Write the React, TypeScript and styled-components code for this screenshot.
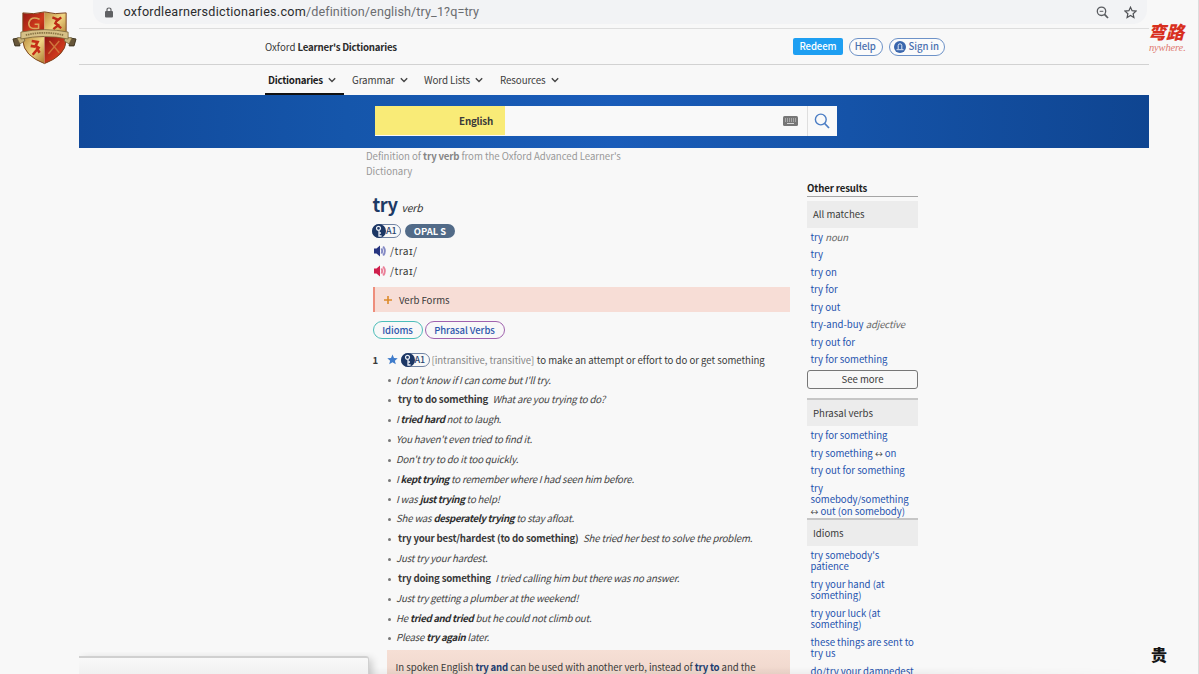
import React from "react";
import styled, { createGlobalStyle } from "styled-components";

const Global = createGlobalStyle`
  * { box-sizing: border-box; }
  html, body { margin: 0; padding: 0; background: #f8f8f8; overflow: hidden; }
  body { font-family: "Noto Sans CJK SC", "Open Sans", sans-serif; color: #3a3a3a; font-size: 10.3px; }
  b { font-weight: 700; }
`;

const Frame = styled.div`
  position: relative;
  width: 1199px;
  height: 674px;
  overflow: hidden;
  display: grid;
  grid-template-columns: 78.5px 1070.5px 1fr;
  background: #f8f8f8;
`;
const LeftRail = styled.aside`
  padding: 10px 0 0 12px;
  svg { display: block; }
`;
const RightRail = styled.aside`
  height: 674px;
  border-right: 1px solid #dcdcdc;
  display: flex;
  flex-direction: column;
  align-items: flex-start;
`;
const Slogan = styled.div`
  margin: 20px 0 0 -1px;
  color: #d8301f;
  font-size: 18px;
  line-height: 22px;
  font-weight: 900;
  font-style: italic;
  white-space: nowrap;
`;
const SloganScript = styled.div`
  color: #e07a70;
  font: italic 10.5px/12px "Liberation Serif", serif;
  letter-spacing: -0.15px;
  white-space: nowrap;
`;
const Caption = styled.div`
  margin: auto 0 8px 2px;
  color: #161616;
  font-size: 16px;
  line-height: 24px;
  font-weight: 900;
`;

const Page = styled.main`
  height: 674px;
  overflow: hidden;
  display: flex;
  flex-direction: column;
`;
const AddressBar = styled.div`
  flex: none;
  height: 29px;
  border-bottom: 1px solid #dddddd;
`;
const AddressPill = styled.div`
  height: 24px;
  margin: 0 2px 0 14.5px;
  padding: 0 10px 0 12px;
  border-radius: 0 0 14px 14px;
  background: #f2f3f5;
  display: flex;
  align-items: center;
`;
const Url = styled.div`
  flex: 1;
  margin-left: 10.5px;
  font: 12.6px/24px Roboto, sans-serif;
  letter-spacing: 0.1px;
  color: #6b6d70;
  white-space: nowrap;
  span { color: #2b2c2e; letter-spacing: 0.25px; }
`;
const BarIcons = styled.div`
  display: flex;
  gap: 15px;
  align-items: center;
`;
const Header = styled.header`
  flex: none;
  height: 36px;
  border-bottom: 1px solid #d2d2d2;
  padding: 0 204px 0 186.5px;
  display: flex;
  align-items: center;
`;
const Brand = styled.div`
  flex: 1;
  font-size: 9.7px;
  white-space: nowrap;
  b { color: #2c2c2c; letter-spacing: -0.23px; }
`;
const Redeem = styled.button`
  width: 50px;
  height: 17px;
  border: 0;
  padding: 0;
  border-radius: 2px;
  background: #1e9ff2;
  color: #fff;
  font: 500 9.6px/17px "Noto Sans CJK SC", sans-serif;
  letter-spacing: -0.1px;
`;
const PillButton = styled.button<{ $w: number }>`
  width: ${(p) => p.$w}px;
  height: 18px;
  margin-left: 6px;
  padding: 0 1.5px 0 0;
  border: 1px solid #6d92c8;
  border-radius: 9px;
  background: #fbfbfb;
  color: #4a70b0;
  font: 500 9.6px/15px "Noto Sans CJK SC", sans-serif;
  letter-spacing: -0.1px;
  display: flex;
  align-items: center;
  justify-content: center;
  gap: 3px;
`;
const Nav = styled.nav`
  flex: none;
  height: 30px;
  padding-left: 186.5px;
  display: flex;
  gap: 5px;
`;
const NavItem = styled.div<{ $w: number; $active?: boolean }>`
  width: ${(p) => p.$w}px;
  padding: 2px 0 0 3px;
  display: flex;
  align-items: center;
  gap: 5px;
  font-size: 9.8px;
  letter-spacing: ${(p) => (p.$active ? -0.27 : -0.1)}px;
  white-space: nowrap;
  border-bottom: 2px solid ${(p) => (p.$active ? "#111" : "transparent")};
  font-weight: ${(p) => (p.$active ? 700 : 400)};
  color: ${(p) => (p.$active ? "#1c1c1c" : "#3c3c3c")};
`;
const Banner = styled.div`
  flex: none;
  height: 53px;
  padding: 11px 0 0 296.5px;
  background: linear-gradient(90deg, #11499a 0%, #1556ab 25%, #1a5cb9 50%, #1553a8 72%, #0f4591 100%);
`;
const SearchBox = styled.div`
  width: 462px;
  height: 30px;
  background: #f9f9f9;
  display: flex;
  align-items: flex-start;
`;
const Language = styled.div`
  width: 130px;
  height: 29px;
  padding-right: 12px;
  background: #f9eb77;
  text-align: right;
  font-weight: 700;
  font-size: 9.8px;
  letter-spacing: -0.2px;
  line-height: 30px;
`;
const SearchField = styled.div`
  flex: 1;
  height: 30px;
  display: flex;
  align-items: center;
  justify-content: flex-end;
  padding-right: 9px;
`;
const SearchButton = styled.div`
  width: 30px;
  height: 30px;
  border-left: 1px solid #dedede;
  padding-right: 1px;
  display: flex;
  align-items: center;
  justify-content: center;
`;

const Content = styled.div`
  display: flex;
  align-items: flex-start;
  padding-left: 287.5px;
`;
const Entry = styled.article`
  width: 424px;
  flex: none;
`;
const Definition = styled.p`
  width: 280px;
  margin: 1px 0 0;
  font-size: 9.65px;
  letter-spacing: -0.03px;
  line-height: 15px;
  color: #999;
  b { color: #858585; letter-spacing: -0.17px; }
`;
const Body = styled.div`
  padding-left: 6.5px;
`;
const Headword = styled.h1`
  margin: 12px 0 0;
  height: 26px;
  display: flex;
  align-items: baseline;
  gap: 4px;
  font-size: 18.3px;
  letter-spacing: -0.5px;
  line-height: 26px;
  color: #1d3a66;
  i { font-size: 10.4px; font-weight: 400; color: #333; letter-spacing: -0.1px; }
`;
const Badges = styled.div`
  height: 16px;
  margin: 5.5px 0 2.5px -0.5px;
  display: flex;
  align-items: center;
  gap: 4px;
`;
const LevelBadge = styled.span`
  flex: none;
  width: 29px;
  height: 14px;
  border: 1px solid #7083a3;
  border-radius: 7px;
  display: inline-flex;
  align-items: center;
  font-size: 9px;
  font-weight: 500;
  line-height: 12px;
  color: #29456f;
  svg { margin-left: -1px; flex: none; }
`;
const Opal = styled.span`
  width: 50px;
  height: 14px;
  border-radius: 7px;
  background: #526b88;
  color: #fff;
  font-size: 9.4px;
  font-weight: 700;
  line-height: 14px;
  text-align: center;
`;
const Pron = styled.div`
  height: 20px;
  padding-left: 1.5px;
  display: flex;
  align-items: center;
  gap: 4px;
  font-size: 10.2px;
  letter-spacing: 0.4px;
  line-height: 20px;
`;
const VerbForms = styled.div`
  width: 417px;
  height: 25px;
  margin-top: 6px;
  border-left: 2px solid #ee8e7c;
  background: #f7ddd6;
  display: flex;
  align-items: center;
  padding-left: 9.5px;
  gap: 7px;
  font-size: 9.6px;
`;
const Jumps = styled.div`
  margin-top: 8.5px;
  display: flex;
  gap: 2px;
`;
const Jump = styled.a<{ $w: number; $c: string }>`
  width: ${(p) => p.$w}px;
  height: 18px;
  border: 1px solid ${(p) => p.$c};
  border-radius: 9px;
  color: #2d57ad;
  font-size: 9.5px;
  font-weight: 500;
  letter-spacing: -0.05px;
  line-height: 16px;
  text-align: center;
`;
const Sense = styled.div`
  height: 20px;
  margin-top: 11px;
  display: flex;
  align-items: center;
  white-space: nowrap;
  line-height: 20px;
  font-size: 9.6px;
  letter-spacing: -0.02px;
`;
const SenseNumber = styled.b`
  width: 14px;
`;
const StarSlot = styled.span`
  width: 14px;
  flex: none;
  display: flex;
`;
const Grammar = styled.span`
  margin: 0 2.5px 0 2px;
  color: #858585;
  letter-spacing: -0.04px;
`;
const Examples = styled.ul`
  list-style: none;
  margin: 1px 0 0;
  padding: 0 0 0 15.5px;
`;
const Example = styled.li`
  height: 19.85px;
  display: flex;
  align-items: center;
  white-space: pre;
  font-size: 9.7px;
  line-height: 19.85px;
  &::before {
    content: "";
    width: 3px;
    height: 3px;
    margin: 1px 5px 0 0;
    border-radius: 50%;
    background: #777;
  }
  i { letter-spacing: -0.2px; color: #444; }
  i b { color: #2e2e2e; letter-spacing: -0.36px; }
`;
const Pattern = styled.b`
  margin: 0 4.5px 0 2px;
  letter-spacing: -0.2px;
`;
const Note = styled.div`
  width: 403px;
  height: 40px;
  margin: 2px 0 0 14px;
  padding: 6.5px 0 0 9px;
  background: linear-gradient(#f6dfd5, #ecd3c8);
  font-size: 9.6px;
  letter-spacing: -0.02px;
  line-height: 20px;
  white-space: nowrap;
  b { color: #203c70; letter-spacing: -0.2px; }
`;

const Sidebar = styled.aside`
  width: 111px;
  margin: 34px 0 0 17px;
`;
const SideTitle = styled.div`
  height: 15px;
  border-bottom: 1px solid #a5a5a5;
  font-size: 9.6px;
  letter-spacing: -0.12px;
  line-height: 12px;
  font-weight: 700;
  color: #222;
  margin-bottom: 4px;
`;
const SideHeading = styled.div<{ $rule?: boolean }>`
  height: ${(p) => (p.$rule ? 28 : 27)}px;
  border-top: ${(p) => (p.$rule ? "2px solid #c6c6c6" : "0")};
  background: #ececec;
  padding-left: 6px;
  font-size: 9.6px;
  line-height: 27px;
`;
const Links = styled.div`
  padding: 4px 0 0 3.5px;
`;
const SideLink = styled.div`
  padding-bottom: 5.9px;
  font-size: 9.6px;
  letter-spacing: -0.02px;
  line-height: 11.6px;
  color: #1f53ae;
  white-space: pre;
  i { color: #666; letter-spacing: -0.15px; }
  &:last-child { padding-bottom: 0.3px; }
`;
const Arrow = styled.span`
  font-size: 7.8px;
  line-height: 8px;
  color: #444;
`;
const SeeMore = styled.div`
  width: 111px;
  height: 19px;
  margin: 4px 0 8.8px;
  border: 1px solid #777;
  border-radius: 3px;
  font-size: 9.6px;
  line-height: 17px;
  text-align: center;
`;

const StatusPopup = styled.div`
  position: absolute;
  left: 79px;
  top: 656px;
  width: 290px;
  height: 30px;
  border: solid #d0d0d0;
  border-width: 2px 1px 0 0;
  border-radius: 0 3px 0 0;
  background: linear-gradient(#f9f9f9, #f0f0f0 18px);
  box-shadow: 3px 3px 8px rgba(0, 0, 0, 0.2);
  clip-path: inset(-4px -14px 0 0);
`;
const BottomShade = styled.div`
  position: absolute;
  left: 369px;
  top: 667px;
  width: 780px;
  height: 7px;
  background: linear-gradient(rgba(0, 0, 0, 0), rgba(0, 0, 0, 0.04));
  mask-image: linear-gradient(90deg, #000 70%, transparent);
`;

const Crest = () => (
  <svg width="65" height="56" viewBox="0 0 66 56">
    <defs>
      <linearGradient id="red" x1="0" y1="0" x2="1" y2="1">
        <stop offset="0" stopColor="#8e1512" />
        <stop offset="0.6" stopColor="#cf3a1c" />
        <stop offset="1" stopColor="#981a12" />
      </linearGradient>
      <linearGradient id="gold" x1="0" y1="0" x2="1" y2="1">
        <stop offset="0" stopColor="#b98a3c" />
        <stop offset="0.5" stopColor="#f0d583" />
        <stop offset="1" stopColor="#a8762b" />
      </linearGradient>
      <clipPath id="shield">
        <path d="M11 2.5 Q22 4.500 33 1.500 Q44 4.500 55 2.500 V31 Q54 46 33 54 Q12 46 11 31Z" />
      </clipPath>
    </defs>
    <g clipPath="url(#shield)">
      <rect x="10" y="0" width="23" height="27" fill="url(#red)" />
      <rect x="33" y="0" width="23" height="27" fill="url(#gold)" />
      <rect x="10" y="27" width="23" height="28" fill="url(#gold)" />
      <rect x="33" y="27" width="23" height="28" fill="url(#red)" />
      <path d="M28 9 Q19 5 17 13 Q17 20 27 18 V14 H23" fill="none" stroke="#d9a75b" strokeWidth="1.600" />
      <path d="M41 7 L46 9 L44 13 L47 15 L42 19 M45 11 L50 7 M46 15 L50 18" fill="none" stroke="#bd2a16" strokeWidth="2.400" />
      <path d="M20 31 L26 32 L24 36 L27 38 L21 45 M24 37 L19 36 M25 38 L28 43" fill="none" stroke="#c52d17" strokeWidth="2.600" />
      <path d="M38 31 L48 43 M48 31 L37 44" stroke="#d0763c" strokeWidth="1.400" />
    </g>
    <path d="M11 2.500 Q22 4.500 33 1.500 Q44 4.500 55 2.500 V31 Q54 46 33 54 Q12 46 11 31Z" fill="none" stroke="#7d451c" />
    <path d="M1 29 L7 28 L8 36 L3 36Z M65 29 L59 28 L58 36 L63 36Z" fill="#67563a" stroke="#3f3521" />
    <path d="M5 28 L12 27 L13 31 L8 34Z M61 28 L54 27 L53 31 L58 34Z" fill="#c7b27a" stroke="#6b5a35" strokeWidth="0.700" />
    <path d="M9 22 Q33 17 57 22 L57 29 Q33 24 9 29Z" fill="#d6c087" stroke="#78643a" strokeWidth="0.800" />
    <path d="M14 25 Q33 20.500 52 25" fill="none" stroke="#8a7546" strokeWidth="1.800" strokeDasharray="1.500 0.800" />
  </svg>
);
const Chevron = () => (
  <svg width="8" height="6" viewBox="0 0 8 6">
    <path d="M0.800 1.200 L4 4.400 L7.200 1.200" fill="none" stroke="#444" strokeWidth="1.400" />
  </svg>
);
const KeyIcon = () => (
  <svg width="14" height="14" viewBox="0 0 14 14">
    <circle cx="7" cy="7" r="7" fill="#1c3765" />
    <circle cx="6.500" cy="4.300" r="2" fill="none" stroke="#e9edf4" strokeWidth="1.200" />
    <path d="M7 6.300 V12 H9.600 M7 9 H9" fill="none" stroke="#e9edf4" strokeWidth="1.300" />
  </svg>
);
const Level = () => (
  <LevelBadge>
    <KeyIcon />
    <span>A1</span>
  </LevelBadge>
);
const Speaker = ({ dark, light }: { dark: string; light: string }) => (
  <svg width="12" height="12" viewBox="0 0 12 12">
    <path d="M0 3.500 H2.500 L6 0.500 V11.500 L2.500 8.500 H0Z" fill={dark} />
    <path d="M7.500 3.300 Q8.800 6 7.500 8.700 M9.200 1.500 Q12.500 6 9.200 10.500" fill="none" stroke={light} strokeWidth="1.900" />
  </svg>
);

export default function App() {
  return (
    <>
      <Global />
      <Frame>
        <LeftRail>
          <Crest />
        </LeftRail>
        <Page>
          <AddressBar>
            <AddressPill>
              <svg width="8" height="11" viewBox="0 0 8 11">
                <rect y="4" width="8" height="6.500" rx="1" fill="#606164" />
                <path d="M2 4.500 V2.700 Q2 1 4 1 Q6 1 6 2.700 V4.500" fill="none" stroke="#606164" strokeWidth="1.200" />
              </svg>
              <Url>
                <span>oxfordlearnersdictionaries.com</span>/definition/english/try_1?q=try
              </Url>
              <BarIcons>
                <svg width="13" height="13" viewBox="0 0 13 13" fill="none" stroke="#5a5c60">
                  <circle cx="5.500" cy="5.300" r="4.200" strokeWidth="1.300" />
                  <path d="M3.700 5.300 H7.300" />
                  <path d="M8.500 8.300 L12 12" strokeWidth="1.700" />
                </svg>
                <svg width="13" height="13" viewBox="0 0 13 13">
                  <path d="M6.500 1.200 L8.100 4.700 L12 5.100 L9.100 7.700 L9.900 11.500 L6.500 9.500 L3.100 11.500 L3.900 7.700 L1 5.100 L4.900 4.700Z" fill="none" stroke="#505256" strokeWidth="1.200" />
                </svg>
              </BarIcons>
            </AddressPill>
          </AddressBar>
          <Header>
            <Brand>
              Oxford <b>Learner's Dictionaries</b>
            </Brand>
            <Redeem>Redeem</Redeem>
            <PillButton $w={34}>Help</PillButton>
            <PillButton $w={56}>
              <svg width="12" height="12" viewBox="0 0 12 12">
                <circle cx="6" cy="6" r="6" fill="#3a66ad" />
                <path d="M4.200 8 V4.500 Q4.200 2.800 6 2.800 Q7.800 2.800 7.800 4.500 V8 M2.500 8.700 H9.500" fill="none" stroke="#dfe8f5" />
              </svg>
              Sign in
            </PillButton>
          </Header>
          <Nav>
            <NavItem $w={79} $active>Dictionaries <Chevron /></NavItem>
            <NavItem $w={67}>Grammar <Chevron /></NavItem>
            <NavItem $w={71}>Word Lists <Chevron /></NavItem>
            <NavItem $w={70}>Resources <Chevron /></NavItem>
          </Nav>
          <Banner>
            <SearchBox>
              <Language>English</Language>
              <SearchField>
                <svg width="15" height="10" viewBox="0 0 15 10">
                  <rect width="15" height="10" rx="1.500" fill="#777" />
                  <path d="M2 3 H13 M2 5 H13" stroke="#d8d8d8" strokeDasharray="1 1" />
                  <path d="M4 7.500 H11" stroke="#d8d8d8" />
                </svg>
              </SearchField>
              <SearchButton>
                <svg width="16" height="16" viewBox="0 0 16 16" fill="none" stroke="#4b7dc4">
                  <circle cx="6.800" cy="6.500" r="5.400" strokeWidth="1.400" />
                  <path d="M10.700 10.500 L15 15" strokeWidth="1.800" />
                </svg>
              </SearchButton>
            </SearchBox>
          </Banner>
          <Content>
            <Entry>
              <Definition>
                Definition of <b>try verb</b> from the Oxford Advanced Learner's
                <br />
                Dictionary
              </Definition>
              <Body>
                <Headword>
                  try <i>verb</i>
                </Headword>
                <Badges>
                  <Level />
                  <Opal>OPAL S</Opal>
                </Badges>
                <Pron><Speaker dark="#26347f" light="#8389c4" />/traɪ/</Pron>
                <Pron><Speaker dark="#cf1f4c" light="#ea7f98" />/traɪ/</Pron>
                <VerbForms>
                  <svg width="8" height="8" viewBox="0 0 8 8">
                    <path d="M4 0 V8 M0 4 H8" stroke="#dd8a2b" strokeWidth="1.600" />
                  </svg>
                  Verb Forms
                </VerbForms>
                <Jumps>
                  <Jump $w={50} $c="#4dbdb9">Idioms</Jump>
                  <Jump $w={80} $c="#a063ae">Phrasal Verbs</Jump>
                </Jumps>
                <Sense>
                  <SenseNumber>1</SenseNumber>
                  <StarSlot>
                    <svg width="11" height="11" viewBox="0 0 11 11">
                      <path d="M5.500 0.500 L7 4 L10.700 4.200 L7.900 6.700 L8.800 10.300 L5.500 8.300 L2.200 10.300 L3.100 6.700 L0.300 4.200 L4 4Z" fill="#3f7ccb" />
                    </svg>
                  </StarSlot>
                  <Level />
                  <Grammar>[intransitive, transitive]</Grammar>
                  to make an attempt or effort to do or get something
                </Sense>
                <Examples>
                  <Example><i>I don't know if I can come but I'll try.</i></Example>
                  <Example><Pattern>try to do something</Pattern><i>What are you trying to do?</i></Example>
                  <Example><i>I <b>tried hard</b> not to laugh.</i></Example>
                  <Example><i>You haven't even tried to find it.</i></Example>
                  <Example><i>Don't try to do it too quickly.</i></Example>
                  <Example><i>I <b>kept trying</b> to remember where I had seen him before.</i></Example>
                  <Example><i>I was <b>just trying</b> to help!</i></Example>
                  <Example><i>She was <b>desperately trying</b> to stay afloat.</i></Example>
                  <Example><Pattern>try your best/hardest (to do something)</Pattern><i>She tried her best to solve the problem.</i></Example>
                  <Example><i>Just try your hardest.</i></Example>
                  <Example><Pattern>try doing something</Pattern><i>I tried calling him but there was no answer.</i></Example>
                  <Example><i>Just try getting a plumber at the weekend!</i></Example>
                  <Example><i>He <b>tried and tried</b> but he could not climb out.</i></Example>
                  <Example><i>Please <b>try again</b> later.</i></Example>
                </Examples>
                <Note>
                  In spoken English <b>try and</b> can be used with another verb, instead of <b>try to</b> and the
                </Note>
              </Body>
            </Entry>
            <Sidebar>
              <SideTitle>Other results</SideTitle>
              <SideHeading>All matches</SideHeading>
              <Links>
                <SideLink>try <i>noun</i></SideLink>
                <SideLink>try</SideLink>
                <SideLink>try on</SideLink>
                <SideLink>try for</SideLink>
                <SideLink>try out</SideLink>
                <SideLink>try-and-buy <i>adjective</i></SideLink>
                <SideLink>try out for</SideLink>
                <SideLink>try for something</SideLink>
              </Links>
              <SeeMore>See more</SeeMore>
              <SideHeading $rule>Phrasal verbs</SideHeading>
              <Links>
                <SideLink>try for something</SideLink>
                <SideLink>try something <Arrow>↔</Arrow> on</SideLink>
                <SideLink>try out for something</SideLink>
                <SideLink>{"try\nsomebody/something\n"}<Arrow>↔</Arrow> out (on somebody)</SideLink>
              </Links>
              <SideHeading $rule>Idioms</SideHeading>
              <Links>
                <SideLink>{"try somebody's\npatience"}</SideLink>
                <SideLink>{"try your hand (at\nsomething)"}</SideLink>
                <SideLink>{"try your luck (at\nsomething)"}</SideLink>
                <SideLink>{"these things are sent to\ntry us"}</SideLink>
                <SideLink>do/try your damnedest</SideLink>
              </Links>
            </Sidebar>
          </Content>
        </Page>
        <RightRail>
          <Slogan>弯路</Slogan>
          <SloganScript>nywhere.</SloganScript>
          <Caption>贵</Caption>
        </RightRail>
        <BottomShade />
        <StatusPopup />
      </Frame>
    </>
  );
}
